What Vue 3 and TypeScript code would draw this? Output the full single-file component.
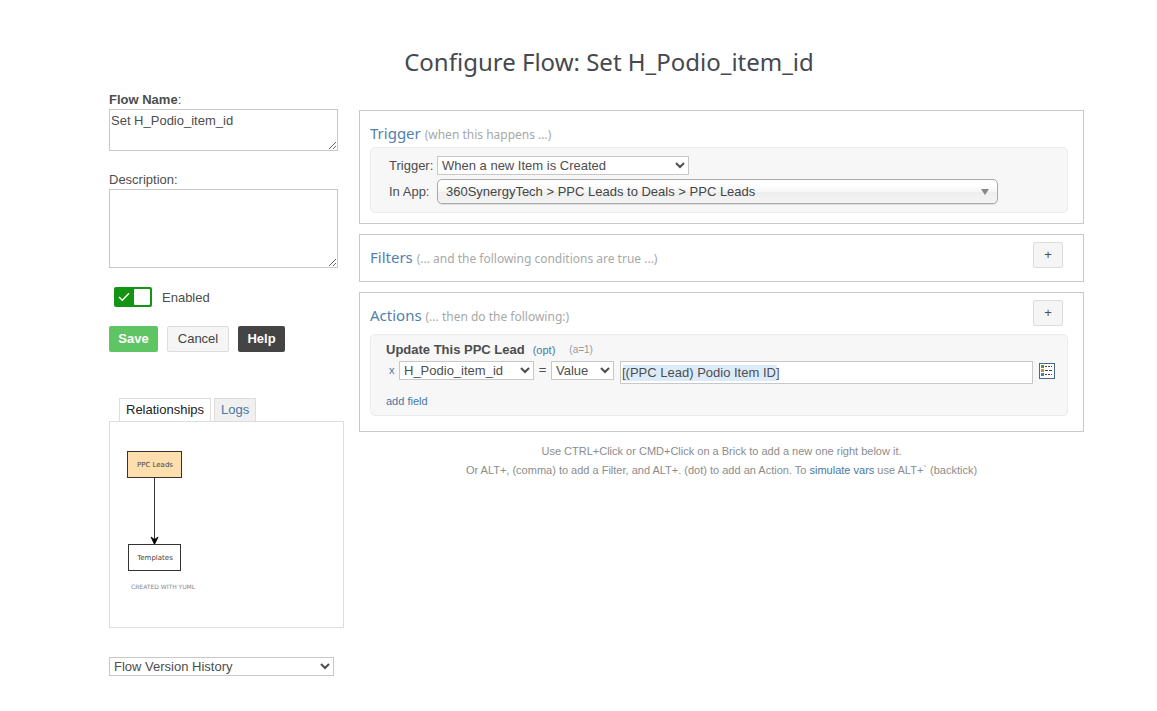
<script setup lang="ts">
import { ref } from 'vue'

const flowName = ref('Set H_Podio_item_id')
const description = ref('')
const enabled = ref(true)
const fieldValue = ref('[(PPC Lead) Podio Item ID]')
</script>

<template>
  <div class="page">
    <h1 class="title">Configure Flow: Set H_Podio_item_id</h1>
    <div class="columns">
      <aside class="side">
        <label class="field-label" for="flow-name"><b>Flow Name</b>:</label>
        <textarea id="flow-name" v-model="flowName" class="area area-name"></textarea>
        <label class="field-label" for="flow-description">Description:</label>
        <textarea id="flow-description" v-model="description" class="area area-description"></textarea>

        <label class="toggle">
          <input v-model="enabled" class="toggle-input" type="checkbox" />
          <span class="switch" aria-hidden="true">
            <svg class="tick" width="12" height="10" viewBox="0 0 12 10">
              <path d="M1 5 L4.3 8.3 L11 1.3" fill="none" stroke="#fff" stroke-width="1.4" />
            </svg>
            <span class="knob"></span>
          </span>
          <span class="toggle-text">Enabled</span>
        </label>

        <div class="buttons">
          <button class="btn btn-save" type="button">Save</button>
          <button class="btn btn-cancel" type="button">Cancel</button>
          <button class="btn btn-help" type="button">Help</button>
        </div>

        <div class="tabs" role="tablist">
          <button class="tab tab-active" type="button" role="tab" aria-selected="true">Relationships</button>
          <button class="tab" type="button" role="tab" aria-selected="false">Logs</button>
        </div>
        <div class="diagram" role="tabpanel">
          <svg width="120" height="160" viewBox="0 0 120 160">
            <rect x="17.5" y="29.5" width="54" height="26" fill="#ffdead" stroke="#333" />
            <text class="node-text" x="45" y="45" text-anchor="middle">PPC Leads</text>
            <path d="M44.5 56 V119" stroke="#333" fill="none" />
            <path d="M41 115 L44.5 122.5 L48 115 L44.5 117.5 Z" fill="#000" stroke="#000" stroke-width="0.8" />
            <rect x="18.5" y="122.5" width="52" height="26" fill="#fff" stroke="#333" />
            <text class="node-text" x="45" y="138" text-anchor="middle">Templates</text>
          </svg>
          <span class="credit">CREATED WITH YUML</span>
        </div>

        <select class="select history" aria-label="Flow Version History">
          <option>Flow Version History</option>
        </select>
      </aside>

      <main class="flow">
        <section class="panel">
          <header class="panel-head head-trigger">
            <h2 class="heading">Trigger <small>(when this happens ...)</small></h2>
          </header>
          <div class="brick trigger-brick">
            <label for="trigger">Trigger:</label>
            <select id="trigger" class="select trigger-select">
              <option>When a new Item is Created</option>
            </select>
            <label for="in-app">In App:</label>
            <div class="app-picker">
              <select id="in-app" class="app-select">
                <option>360SynergyTech &gt; PPC Leads to Deals &gt; PPC Leads</option>
              </select>
              <span class="app-arrow" aria-hidden="true"></span>
            </div>
          </div>
        </section>

        <section class="panel panel-filters">
          <header class="panel-head head-filters">
            <h2 class="heading">Filters <small>(... and the following conditions are true ...)</small></h2>
            <button class="btn btn-add" type="button" aria-label="Add filter">+</button>
          </header>
        </section>

        <section class="panel panel-actions">
          <header class="panel-head head-actions">
            <h2 class="heading">Actions <small>(... then do the following:)</small></h2>
            <button class="btn btn-add" type="button" aria-label="Add action">+</button>
          </header>
          <div class="brick action-brick">
            <div class="action-name">
              <b>Update This PPC Lead</b>
              <a class="small-link" href="#">(opt)</a>
              <span class="alias">(a=1)</span>
            </div>
            <div class="action-row">
              <a class="small-link remove" href="#" aria-label="Remove field">x</a>
              <select class="select field-select" aria-label="Field">
                <option>H_Podio_item_id</option>
              </select>
              <span class="equals">=</span>
              <select class="select kind-select" aria-label="Value type">
                <option>Value</option>
              </select>
              <input v-model="fieldValue" class="value-input" type="text" aria-label="Value" />
              <button class="token-button" type="button" aria-label="Insert token">
                <svg width="16" height="16" viewBox="0 0 16 16">
                  <rect x="0.5" y="0.5" width="15" height="15" fill="#fff" stroke="#48678c" />
                  <rect x="2" y="2" width="3" height="3" fill="#5c8f4c" />
                  <rect x="2" y="6" width="3" height="3" fill="#d2883e" />
                  <rect x="2" y="10" width="3" height="3" fill="#3a82b8" />
                  <path d="M6 3.5 H8 M9 3.5 H11 M12 3.5 H13 M6 7.5 H9 M10 7.5 H13 M6 11.5 H8 M9 11.5 H11 M12 11.5 H13" stroke="#444" />
                </svg>
              </button>
            </div>
            <a class="small-link add-field" href="#">add field</a>
          </div>
        </section>

        <footer class="hints">
          <p>Use CTRL+Click or CMD+Click on a Brick to add a new one right below it.</p>
          <p>Or ALT+, (comma) to add a Filter, and ALT+. (dot) to add an Action. To <a href="#">simulate vars</a> use ALT+` (backtick)</p>
        </footer>
      </main>
    </div>
  </div>
</template>

<style>
body {
  margin: 0;
  background: #fff;
}
</style>

<style scoped>
.page {
  padding: 44px 48px 24px 109px;
  color: #4d4d4d;
  font: 13px/18px "Liberation Sans", Arial, sans-serif;
}
.page *,
.page *::before {
  box-sizing: border-box;
}
.title {
  margin: 0 0 10px;
  color: #45484f;
  font: 400 24px/36px "Noto Sans", sans-serif;
  text-align: center;
}
.columns {
  display: flex;
  align-items: flex-start;
  gap: 15px;
  padding-right: 25px;
}
.side {
  display: flex;
  flex: 0 0 235px;
  flex-direction: column;
  align-items: flex-start;
}
.flow {
  flex: 1;
  min-width: 0;
  padding-top: 20px;
}
select,
textarea,
input,
button {
  color: inherit;
  font: inherit;
}
.field-label {
  height: 19px;
  line-height: 20px;
}
.area {
  width: 229px;
  margin: 0 0 19px;
  padding: 2px 1px;
  border: 1px solid #c8c8c8;
  background: #fff;
}
.area-name {
  height: 42px;
}
.area-description {
  height: 79px;
}
.toggle {
  display: flex;
  align-items: center;
  gap: 10px;
  height: 20px;
  margin-left: 5px;
}
.toggle-input {
  position: absolute;
  opacity: 0;
}
.toggle-text {
  line-height: 20px;
  padding-top: 1px;
}
.switch {
  display: flex;
  align-items: center;
  justify-content: space-between;
  width: 38px;
  height: 20px;
  padding: 0 2px 0 4px;
  border-radius: 2px;
  background: #149414;
}
.knob {
  width: 16px;
  height: 16px;
  border-radius: 1px;
  background: #fff;
}
.buttons {
  display: flex;
  gap: 9px;
  margin-top: 19px;
}
.btn {
  height: 26px;
  padding: 0 9px;
  border: 1px solid transparent;
  border-radius: 2px;
  line-height: 22px;
}
.btn-save {
  width: 49px;
  padding: 0;
  background: #5fc463;
  color: #fff;
  font-weight: bold;
}
.btn-cancel {
  width: 62px;
  border-color: #ddd;
  background: #f5f5f5;
  color: #444;
}
.btn-help {
  width: 47px;
  padding: 0;
  background: #444;
  color: #fff;
  font-weight: bold;
}
.tabs {
  display: flex;
  gap: 3px;
  margin: 46px 0 0 10px;
}
.tab {
  height: 23px;
  padding: 0 6px;
  border: 1px solid #ddd;
  border-bottom: 0;
  background: #f0f0f0;
  color: #4678a8;
}
.tab-active {
  background: #fff;
  color: #222;
}
.diagram {
  display: flex;
  flex-direction: column;
  width: 235px;
  height: 207px;
  border: 1px solid #ddd;
}
.node-text {
  fill: #444;
  font: 7px "DejaVu Sans", sans-serif;
}
.credit {
  margin-left: 21px;
  color: #888;
  font: 6px/10px "DejaVu Sans", sans-serif;
}
.select {
  height: 19px;
  padding: 0;
  border: 1px solid #c8c8c8;
  border-radius: 0;
  background: #fff;
}
.history {
  width: 225px;
  margin-top: 29px;
}
.panel {
  margin-bottom: 10px;
  padding: 0 15px 10px 10px;
  border: 1px solid #c8c8c8;
}
.panel-filters {
  padding-bottom: 0;
}
.panel-actions {
  padding-bottom: 15px;
}
.panel-head {
  display: flex;
  align-items: flex-start;
  justify-content: space-between;
  padding-right: 5px;
}
.head-trigger {
  height: 36px;
}
.head-filters {
  height: 46px;
}
.head-actions {
  height: 41px;
}
.heading {
  margin: 10px 0 0;
  color: #5380ad;
  font: 400 15px/24px "Noto Sans", sans-serif;
}
.heading small {
  color: #a8a8a8;
  font-size: 12px;
}
.btn-add {
  width: 30px;
  margin-top: 7px;
  padding: 0;
  border-color: #ddd;
  background: #f5f5f5;
}
.brick {
  border: 1px solid #ececec;
  border-radius: 5px;
  background: #f7f7f7;
}
.trigger-brick {
  display: grid;
  grid-template-columns: 44px minmax(0, 561px);
  gap: 4px;
  align-items: center;
  padding: 8px 18px;
}
.trigger-select {
  width: 252px;
}
.app-picker {
  position: relative;
}
.app-select {
  display: block;
  width: 100%;
  height: 25px;
  padding: 0 24px 0 8px;
  border: 1px solid #aaa;
  border-radius: 5px;
  background: linear-gradient(#fff 20%, #f6f6f6 50%, #eee 52%, #f4f4f4);
  box-shadow: 0 1px 1px rgba(0, 0, 0, 0.1);
  color: #444;
  appearance: none;
}
.app-arrow {
  position: absolute;
  top: 10px;
  right: 9px;
  border: 4px solid transparent;
  border-top: 6px solid #888;
  border-bottom: 0;
  pointer-events: none;
}
.action-brick {
  padding: 5px 12px 5px 15px;
}
.action-name {
  display: flex;
  align-items: center;
  height: 21px;
  padding-bottom: 1px;
}
.action-name .small-link {
  margin-left: 8px;
}
.alias {
  margin-left: 14px;
  color: #999;
  font-size: 10px;
}
a {
  color: #4678a8;
  text-decoration: none;
}
.small-link {
  font-size: 11px;
}
.action-row {
  display: flex;
  align-items: flex-start;
  height: 24px;
}
.remove {
  width: 10px;
  margin-left: 3px;
}
.field-select {
  width: 135px;
}
.equals {
  width: 17px;
  text-align: center;
}
.kind-select {
  width: 63px;
}
.value-input {
  flex: 1;
  min-width: 0;
  height: 23px;
  margin: 0 6px;
  padding: 0 1px;
  border: 1px solid #c8c8c8;
  background: #fff linear-gradient(#dcebfa, #dcebfa) 2px 3px / 154px 16px no-repeat;
}
.token-button {
  height: 16px;
  margin-top: 2px;
  padding: 0;
  border: 0;
  background: none;
}
.token-button svg {
  display: block;
}
.add-field {
  display: block;
  width: fit-content;
  margin: 7px 0 0;
}
.hints {
  color: #8c8c8c;
  font-size: 11px;
  line-height: 19px;
  text-align: center;
}
.hints p {
  margin: 0;
}
</style>
